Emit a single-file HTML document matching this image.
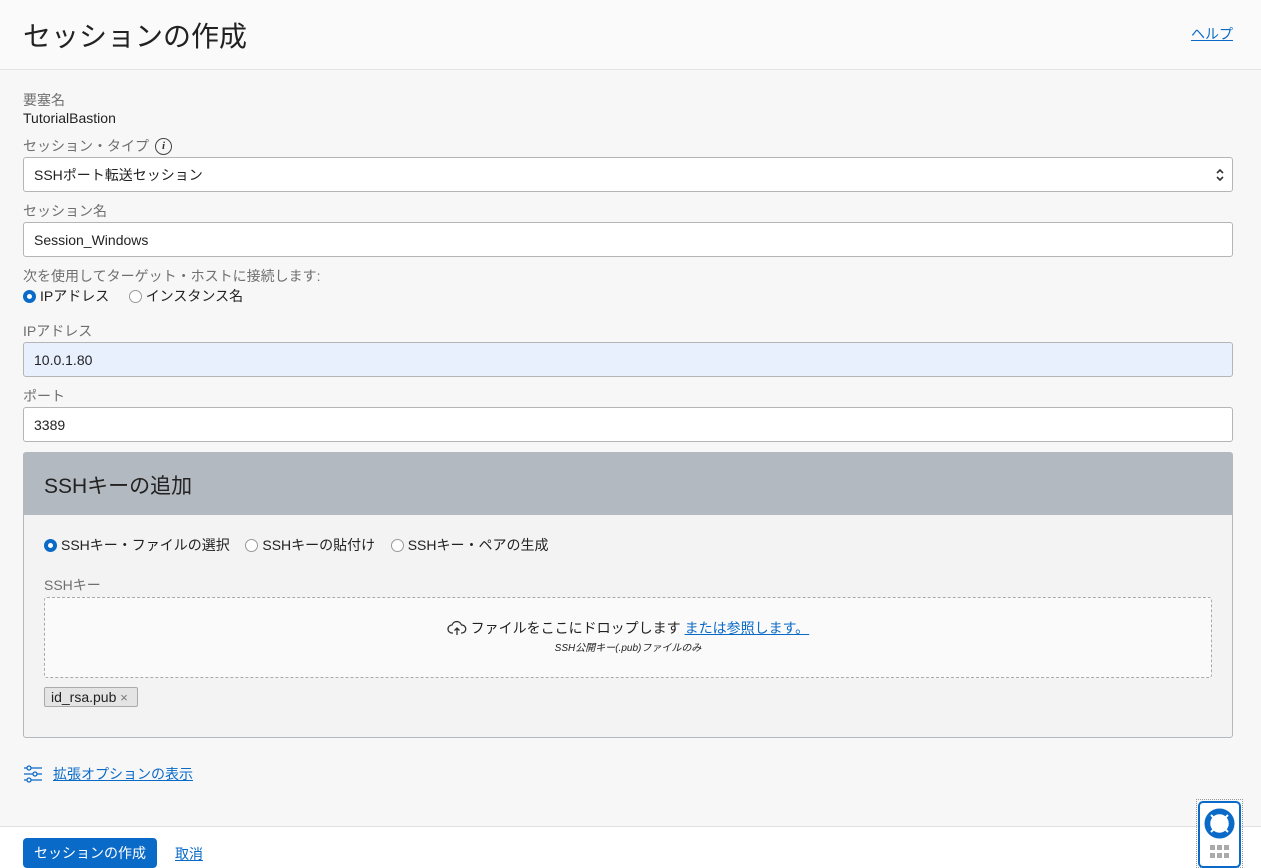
<!DOCTYPE html>
<html><head><meta charset="utf-8"><style>
*{box-sizing:border-box;margin:0;padding:0}
body{width:1261px;height:868px;overflow:hidden;background:#f7f7f7;font-family:"Liberation Sans","Noto Sans CJK JP",sans-serif;color:#333;font-size:14px;position:relative}
.a{position:absolute}
.hdr{left:0;top:0;width:1261px;height:70px;background:#fafafa;border-bottom:1px solid #e4e4e4}
.lbl{color:#6f6f6f;font-size:14px}
.inp{left:23px;width:1210px;height:35px;background:#fff;border:1px solid #b5b5b5;border-radius:3px;padding:0 10px;line-height:34px;font-size:14px;color:#222}
a,.lk{color:#0a6ac8;text-decoration:underline}
.rad{display:inline-block;width:13px;height:13px;border-radius:50%;border:1px solid #999;background:#fff;vertical-align:-2px;margin-right:4px}
.rad.on{border:4px solid #0a6ac8}
</style></head><body>
<div class="a hdr"></div>
<div class="a" style="left:23px;top:15px;font-size:28px;color:#222">セッションの作成</div>
<div class="a lk" style="left:1191px;top:24px;font-size:14px">ヘルプ</div>
<div class="a lbl" style="left:23px;top:90px">要塞名</div>
<div class="a" style="left:23px;top:110px;color:#222">TutorialBastion</div>
<div class="a lbl" style="left:23px;top:136px">セッション・タイプ</div>
<div class="a" style="left:155px;top:138px;width:17px;height:17px;border:1.5px solid #444;border-radius:50%;font-size:11px;text-align:center;line-height:14px;font-style:italic;font-weight:bold;font-family:'Liberation Serif',serif;color:#333">i</div>
<div class="a inp" style="top:157px">SSHポート転送セッション
<svg style="position:absolute;right:7px;top:9px" width="10" height="16" viewBox="0 0 10 16" fill="none" stroke="#333" stroke-width="1.6"><path d="M2 6l3-3 3 3M2 10l3 3 3-3"/></svg></div>
<div class="a lbl" style="left:23px;top:201px">セッション名</div>
<div class="a inp" style="top:222px">Session_Windows</div>
<div class="a lbl" style="left:23px;top:266px">次を使用してターゲット・ホストに接続します:</div>
<div class="a" style="left:23px;top:286px;color:#222"><span class="rad on"></span>IPアドレス &nbsp;&nbsp;&nbsp;&nbsp;<span class="rad"></span>インスタンス名</div>
<div class="a lbl" style="left:23px;top:321px">IPアドレス</div>
<div class="a inp" style="top:342px;background:#e8f0fe">10.0.1.80</div>
<div class="a lbl" style="left:23px;top:386px">ポート</div>
<div class="a inp" style="top:407px">3389</div>
<div class="a" style="left:23px;top:452px;width:1210px;height:286px;border:1px solid #b3b8bf;border-radius:3px;background:#f3f3f3">
<div style="height:62px;background:#b3b9c0;padding:17px 20px;font-size:21px;color:#222">SSHキーの追加</div>
<div class="a" style="left:20px;top:82px;color:#222"><span class="rad on"></span>SSHキー・ファイルの選択 &nbsp;&nbsp;&nbsp;<span class="rad"></span>SSHキーの貼付け &nbsp;&nbsp;&nbsp;<span class="rad"></span>SSHキー・ペアの生成</div>
<div class="a lbl" style="left:20px;top:122px">SSHキー</div>
<div class="a" style="left:20px;top:144px;width:1168px;height:81px;border:1px dashed #aaa;border-radius:3px;background:#fafafa;text-align:center">
<div style="margin-top:20px;color:#222"><svg width="20" height="16" viewBox="0 0 20 16" style="vertical-align:-3px"><path d="M6 13H5a4 4 0 0 1 0-8 5 5 0 0 1 9.5 0A4 4 0 0 1 15 13h-1M10 15V8M7.5 10.5L10 8l2.5 2.5" fill="none" stroke="#333" stroke-width="1.3"/></svg> ファイルをここにドロップします <span class="lk">または参照します。</span></div>
<div style="font-size:10px;font-style:italic;margin-top:1px;color:#222">SSH公開キー(.pub)ファイルのみ</div></div>
<div class="a" style="left:20px;top:234px;width:94px;height:20px;padding:0 6px;border:1px solid #aaa;background:#e4e4e4;border-radius:2px;font-size:14px;line-height:18px;color:#222">id_rsa.pub <span style="color:#777;font-size:13px">×</span></div>
</div>
<svg class="a" style="left:24px;top:765px" width="18" height="18" viewBox="0 0 18 18" fill="none" stroke="#0a6ac8" stroke-width="1.3"><path d="M0 3h3M7 3h11M0 9h9M13 9h5M0 15h3M7 15h11"/><circle cx="5" cy="3" r="2"/><circle cx="11" cy="9" r="2"/><circle cx="5" cy="15" r="2"/></svg>
<div class="a lk" style="left:53px;top:764px">拡張オプションの表示</div>
<div class="a" style="left:0;top:826px;width:1261px;height:42px;background:#fff;border-top:1px solid #e0e0e0"></div>
<div class="a" style="left:23px;top:838px;width:134px;height:30px;background:#0a6ac8;border-radius:4px;color:#fff;text-align:center;line-height:30px;font-size:14px">セッションの作成</div>
<div class="a lk" style="left:175px;top:844px">取消</div>
<div class="a" style="left:1196px;top:799px;width:47px;height:69px;border:1px dotted #999"></div>
<div class="a" style="left:1198px;top:801px;width:43px;height:67px;border:2px solid #0a6ac8;border-radius:5px;background:#fff">
<svg style="position:absolute;left:4px;top:5px" width="31" height="31" viewBox="0 0 31 31"><circle cx="15.5" cy="15.5" r="12" fill="none" stroke="#0a6ac8" stroke-width="6"/><circle cx="15.5" cy="15.5" r="8.5" fill="none" stroke="#fff" stroke-width="1.5"/><path d="M7 7l5 5M24 7l-5 5M7 24l5-5M24 24l-5-5" stroke="#fff" stroke-width="2"/></svg>
<div style="position:absolute;left:10px;top:42px;width:20px;font-size:0">
<span style="display:inline-block;width:5px;height:5px;background:#aaa;margin:0 2px 3px 0"></span><span style="display:inline-block;width:5px;height:5px;background:#aaa;margin:0 2px 3px 0"></span><span style="display:inline-block;width:5px;height:5px;background:#aaa;margin:0 0 3px 0"></span><br><span style="display:inline-block;width:5px;height:5px;background:#aaa;margin:0 2px 0 0"></span><span style="display:inline-block;width:5px;height:5px;background:#aaa;margin:0 2px 0 0"></span><span style="display:inline-block;width:5px;height:5px;background:#aaa"></span></div>
</div>
</body></html>
